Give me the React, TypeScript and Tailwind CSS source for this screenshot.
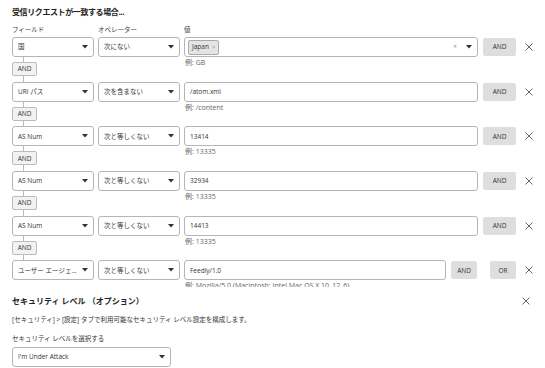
import React from "react";

const font = { fontFamily: "'Open Sans', 'Noto Sans CJK JP', sans-serif" };

function Caret() {
  return (
    <svg width="6" height="4" viewBox="0 0 6 4" className="shrink-0">
      <path d="M0 0 L6 0 L3 3.5 Z" fill="#333" />
    </svg>
  );
}

function XIcon({ size = 8, color = "#555" }: { size?: number; color?: string }) {
  return (
    <svg width={size} height={size} viewBox="0 0 8 8" className="shrink-0">
      <path d="M0.5 0.5 L7.5 7.5 M7.5 0.5 L0.5 7.5" stroke={color} strokeWidth="0.9" />
    </svg>
  );
}

function Select({ label, w }: { label: string; w: string }) {
  return (
    <div className={`${w} h-[20px] border border-[#b5b5b5] rounded-[3px] bg-white flex items-center justify-between pl-[5px] pr-[5px] shrink-0`}>
      <span className="text-[6.5px] text-[#333] truncate">{label}</span>
      <Caret />
    </div>
  );
}

type Rule = { field: string; op: string; value: string; ex: string; chip?: boolean };

const rules: Rule[] = [
  { field: "国", op: "次にない", value: "", ex: "例: GB", chip: true },
  { field: "URI パス", op: "次を含まない", value: "/atom.xml", ex: "例: /content" },
  { field: "AS Num", op: "次と等しくない", value: "13414", ex: "例: 13335" },
  { field: "AS Num", op: "次と等しくない", value: "32934", ex: "例: 13335" },
  { field: "AS Num", op: "次と等しくない", value: "14413", ex: "例: 13335" },
  { field: "ユーザー エージェ...", op: "次と等しくない", value: "Feedly/1.0", ex: "例: Mozilla/5.0 (Macintosh; Intel Mac OS X 10_12_6)" },
];

function Connector() {
  return (
    <div className="flex flex-col items-start">
      <div className="w-[1px] h-[5px] bg-[#bbb] ml-[11px]" />
      <div className="w-[25px] h-[14px] border border-[#bbb] bg-[#f2f2f2] rounded-[2px] flex items-center justify-center text-[6.5px] text-[#333]">
        AND
      </div>
      <div className="w-[1px] h-[5.7px] bg-[#bbb] ml-[11px]" />
    </div>
  );
}

function RuleRow({ r, last }: { r: Rule; last: boolean }) {
  return (
    <div className="flex items-start">
      <div className="flex flex-col w-[82px] shrink-0">
        <Select label={r.field} w="w-[82px]" />
        {!last && <Connector />}
      </div>
      <div className="ml-[4px]">
        <Select label={r.op} w="w-[82px]" />
      </div>
      <div className="ml-[4px] flex-1 flex flex-col min-w-0">
        <div className="h-[20px] border border-[#b5b5b5] rounded-[3px] bg-white flex items-center pl-[3px] pr-[5px]">
          {r.chip ? (
            <>
              <div className="h-[15px] px-[3px] bg-[#e4e4e4] border border-[#aaa] rounded-[2px] flex items-center gap-[3px]">
                <span className="text-[6.5px] text-[#333]">Japan</span>
                <span className="text-[6px] text-[#999]">×</span>
              </div>
              <div className="flex-1" />
              <span className="text-[7px] text-[#999] mr-[9px]">×</span>
              <Caret />
            </>
          ) : (
            <span className="text-[6.5px] text-[#333] pl-[2px]">{r.value}</span>
          )}
        </div>
        <div className="text-[7px] leading-[10px] text-[#666] mt-[1px] pl-[1px] whitespace-nowrap">{r.ex}</div>
      </div>
      {last ? (
        <>
          <div className="ml-[5px] mt-[1px] w-[26px] h-[18px] bg-[#dedede] rounded-[2px] flex items-center justify-center text-[6.5px] text-[#333]">AND</div>
          <div className="ml-[13px] mt-[1px] w-[26px] h-[18px] bg-[#dedede] rounded-[2px] flex items-center justify-center text-[6.5px] text-[#333]">OR</div>
        </>
      ) : (
        <div className="ml-[5px] mt-[1px] w-[33px] h-[18px] bg-[#dedede] rounded-[2px] flex items-center justify-center text-[6.5px] text-[#333]">AND</div>
      )}
      <div className="ml-[9px] h-[20px] flex items-center">
        <XIcon />
      </div>
    </div>
  );
}

export default function App() {
  return (
    <div className="w-[545px] h-[368px] bg-white overflow-hidden" style={font}>
      <div className="px-[12px]">
        <div className="pt-[6px] h-[22px] text-[8px] font-bold text-[#222] tracking-[-0.4px]">受信リクエストが一致する場合...</div>
        <div className="flex h-[15px] items-center text-[6.5px] text-[#444]">
          <div className="w-[86px]">フィールド</div>
          <div className="w-[86px]">オペレーター</div>
          <div>値</div>
        </div>
        <div className="h-[250px] overflow-hidden">
          {rules.map((r, i) => (
            <RuleRow key={i} r={r} last={i === rules.length - 1} />
          ))}
        </div>
        <div className="flex items-center justify-between mt-[8px] h-[12px]">
          <div className="text-[8px] font-bold text-[#222]">セキュリティ レベル （オプション）</div>
          <div className="mr-[3px]">
            <XIcon />
          </div>
        </div>
        <div className="mt-[8px] text-[6.5px] text-[#333]">[セキュリティ] &gt; [設定] タブで利用可能なセキュリティ レベル設定を構成します。</div>
        <div className="mt-[9px] text-[6.5px] text-[#333]">セキュリティ レベルを選択する</div>
        <div className="mt-[3px]">
          <Select label="I'm Under Attack" w="w-[159px]" />
        </div>
      </div>
    </div>
  );
}
